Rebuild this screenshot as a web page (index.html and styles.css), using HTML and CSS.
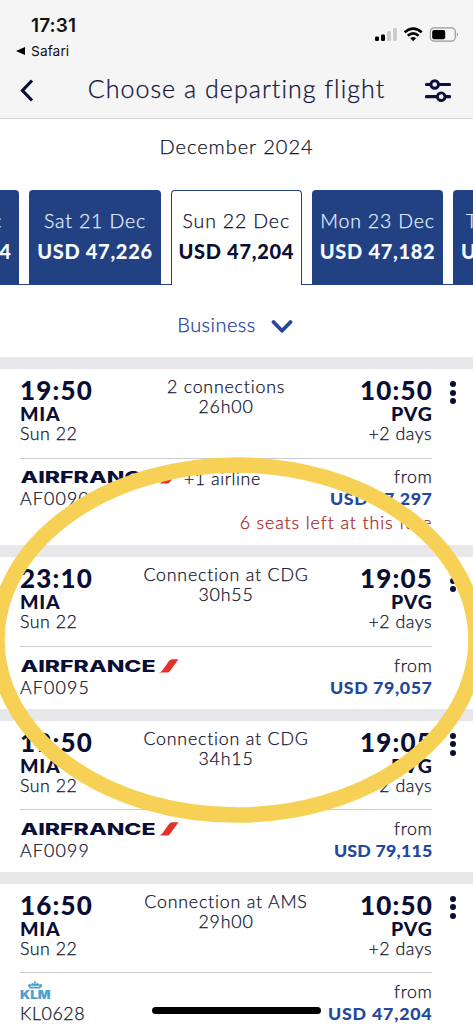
FILE: index.html
```html
<!DOCTYPE html>
<html lang="en">
<head>
<meta charset="utf-8">
<title>Choose a departing flight</title>
<link rel="stylesheet" href="styles.css">
</head>
<body>
<svg class="defs" width="0" height="0">
  <symbol id="airfrance" viewBox="0 0 160 16">
    <text class="af-word" x="0.500" y="13.300" textLength="135" lengthAdjust="spacingAndGlyphs">AIRFRANCE</text>
    <path d="M139 13.500 C141 13 141.800 12.300 143 10.600 L149 2 Q150.200 0.300 152.300 0.300 H158.500 L150 12 Q149 13.500 147 13.500Z" fill="#e2332b"/>
  </symbol>
</svg>
<div class="screen">
  <header class="header">
    <div class="status">
      <div class="clock">17:31</div>
      <svg class="status-icons" width="84" height="16" viewBox="0 0 84 16">
        <rect x="0" y="9.500" width="4" height="4.500" rx="1.200"/>
        <rect x="6" y="7.500" width="4" height="6.500" rx="1.200"/>
        <rect x="12" y="4" width="4" height="10" rx="1.200" fill="#ccc"/>
        <rect x="18" y="1" width="4" height="13" rx="1.200" fill="#ccc"/>
        <g fill="none" stroke="#000" stroke-width="2.600">
          <path d="M29.700 5.400 Q38.200 -2.200 46.700 5.400"/>
          <path d="M32.800 8.800 Q38.200 4.100 43.600 8.800"/>
        </g>
        <path d="M35.300 11.200 Q38.200 8.800 41.100 11.200 L38.200 14.200Z"/>
        <rect x="55.300" y="0.900" width="25" height="13.200" rx="3.800" fill="none" stroke="#999" stroke-width="1.200"/>
        <rect x="57.200" y="2.900" width="13" height="9.300" rx="2"/>
        <path d="M81.800 5.400 Q84 7.500 81.800 9.600Z" fill="#888"/>
      </svg>
    </div>
    <div class="back-app"><svg width="9" height="8" viewBox="0 0 9 8"><path d="M0 4 L9 0 V8Z"/></svg><span>Safari</span></div>
    <div class="nav">
      <svg width="14" height="23" viewBox="0 0 14 23"><path d="M12 1.500 L2.500 11.500 L12 21.500" fill="none" stroke="#0c0f3a" stroke-width="3.200"/></svg>
      <h1 class="title">Choose a departing flight</h1>
      <svg width="26" height="23" viewBox="0 0 26 23"><g fill="#f5f5f5" stroke="#0c0f3a" stroke-width="2.900"><path d="M1.500 5.500H24.500M1.500 17.700H24.500" stroke-width="3.200" stroke-linecap="round"/><circle cx="9.700" cy="5.500" r="3.800"/><circle cx="16.200" cy="17.700" r="3.800"/></g></svg>
    </div>
  </header>

  <div class="month">December 2024</div>
  <div class="tabs">
    <div class="tab"><span class="tab-day">Fri 20 Dec</span><span class="tab-price">USD 47,204</span></div>
    <div class="tab"><span class="tab-day">Sat 21 Dec</span><span class="tab-price">USD 47,226</span></div>
    <div class="tab selected"><span class="tab-day">Sun 22 Dec</span><span class="tab-price">USD 47,204</span></div>
    <div class="tab"><span class="tab-day">Mon 23 Dec</span><span class="tab-price">USD 47,182</span></div>
    <div class="tab"><span class="tab-day">Tue 24 Dec</span><span class="tab-price">USD 47,204</span></div>
  </div>
  <div class="cabin"><span>Business</span><svg width="22" height="15" viewBox="0 0 22 15"><path d="M2.500 3 L11 11.800 L19.500 3" fill="none" stroke="#2546a3" stroke-width="3.800" stroke-linecap="round" stroke-linejoin="round"/></svg></div>

  <main class="flights">
    <article class="flight tall">
      <div class="route">
        <div class="place"><b class="time">19:50</b><b class="code">MIA</b><span>Sun 22</span></div>
        <div class="via"><span>2 connections</span><span>26h00</span></div>
        <div class="place end"><b class="time">10:50</b><b class="code">PVG</b><span>+2 days</span></div>
      </div>
      <div class="offer">
        <div class="carrier"><svg class="af" width="160" height="16"><use href="#airfrance"/></svg><span class="number">AF0090</span></div>
        <span class="extra">+1 airline</span>
        <div class="fare"><span>from</span><b>USD 47,297</b><span class="seats">6 seats left at this fare</span></div>
      </div>
      <div class="more"><i></i><i></i><i></i></div>
    </article>
    <article class="flight">
      <div class="route">
        <div class="place"><b class="time">23:10</b><b class="code">MIA</b><span>Sun 22</span></div>
        <div class="via"><span>Connection at CDG</span><span>30h55</span></div>
        <div class="place end"><b class="time">19:05</b><b class="code">PVG</b><span>+2 days</span></div>
      </div>
      <div class="offer">
        <div class="carrier"><svg class="af" width="160" height="16"><use href="#airfrance"/></svg><span class="number">AF0095</span></div>
        <div class="fare"><span>from</span><b>USD 79,057</b></div>
      </div>
      <div class="more"><i></i><i></i><i></i></div>
    </article>
    <article class="flight">
      <div class="route">
        <div class="place"><b class="time">19:50</b><b class="code">MIA</b><span>Sun 22</span></div>
        <div class="via"><span>Connection at CDG</span><span>34h15</span></div>
        <div class="place end"><b class="time">19:05</b><b class="code">PVG</b><span>+2 days</span></div>
      </div>
      <div class="offer">
        <div class="carrier"><svg class="af" width="160" height="16"><use href="#airfrance"/></svg><span class="number">AF0099</span></div>
        <div class="fare"><span>from</span><b class="narrow">USD 79,115</b></div>
      </div>
      <div class="more"><i></i><i></i><i></i></div>
    </article>
    <article class="flight">
      <div class="route">
        <div class="place"><b class="time">16:50</b><b class="code">MIA</b><span>Sun 22</span></div>
        <div class="via"><span>Connection at AMS</span><span>29h00</span></div>
        <div class="place end"><b class="time">10:50</b><b class="code">PVG</b><span>+2 days</span></div>
      </div>
      <div class="offer">
        <div class="carrier">
          <svg class="klm" width="31" height="20" viewBox="0 0 31 20">
            <g fill="#4a9fd3"><circle cx="9.500" cy="4.500" r="1.600"/><circle cx="12.500" cy="3.500" r="1.600"/><circle cx="17.500" cy="3.500" r="1.600"/><circle cx="20.500" cy="4.500" r="1.600"/><rect x="14.500" y="0" width="1" height="5"/><rect x="13.800" y="0.800" width="2.400" height="1"/><circle cx="15" cy="4" r="1.300"/><path d="M9 5.700 H21 L20.400 7.500 H9.600Z"/></g>
            <text class="klm-word" x="0" y="18" textLength="30.500" lengthAdjust="spacingAndGlyphs">KLM</text>
          </svg>
          <span class="number kl">KL0628</span>
        </div>
        <div class="fare"><span>from</span><b class="wide">USD 47,204</b></div>
      </div>
      <div class="more"><i></i><i></i><i></i></div>
    </article>
  </main>
  <svg class="highlight" width="473" height="1024" viewBox="0 0 473 1024"><ellipse cx="236.500" cy="640" rx="239.500" ry="175" fill="none" stroke="#f6d155" stroke-width="15.500"/></svg>
  <div class="home-bar"></div>
</div>
</body>
</html>
```
FILE: styles.css
```css
* { box-sizing: border-box; }
body { margin: 0; background: #fff; }
.defs { display: block; height: 0; }
.screen {
  position: relative;
  width: 473px;
  height: 1024px;
  overflow: hidden;
  background: #fff;
  color: #10122c;
  font-family: Lato, "Open Sans", sans-serif;
  font-size: 17.8px;
  font-weight: 300;
  -webkit-text-stroke: 0.25px currentColor;
}
b, text, .clock, .back-app, .tab-price { -webkit-text-stroke: 0; }
.header { height: 119px; background: #f5f5f5; border-bottom: 1px solid #d6d6d8; }
.status { display: flex; justify-content: space-between; padding: 14px 14px 0 31px; height: 42px; }
.clock { font: 600 19px/24px Inter, sans-serif; color: #111; letter-spacing: 0.1px; }
.status-icons { margin-top: 13px; }
.back-app {
  display: flex; align-items: center; gap: 6px; height: 18px; padding-left: 16px;
  font: 400 13.7px/18px Inter, sans-serif; color: #111; letter-spacing: 0.1px;
}
.nav { display: flex; align-items: center; justify-content: space-between; height: 60px; padding: 0 22px 0 20px; }
.title { margin: -4px 0 0 14px; font-size: 25px; font-weight: 300; line-height: 32px; letter-spacing: 1.05px; color: #10123a; }
.month { height: 71px; padding-top: 15px; text-align: center; font-size: 20px; line-height: 24px; letter-spacing: 1px; }
.tabs { display: flex; gap: 10px; height: 95px; margin-left: -112px; width: 720px; background: linear-gradient(#24427f, #24427f) bottom / 100% 1px no-repeat; }
.tab {
  flex: 0 0 131.300px; display: flex; flex-direction: column; align-items: center;
  padding-top: 19px; background: #224183; color: #e6f0ff; border-radius: 4px 4px 0 0; white-space: nowrap;
}
.tab.selected { background: #fff; color: #10122c; border: 1px solid #24427f; border-bottom: 0; padding-top: 18px; }
.tab-day { font-size: 19.5px; line-height: 24px; height: 30px; letter-spacing: 0.85px; }
.tab-price { font-size: 20px; font-weight: 900; line-height: 24px; height: 24px; color: #f6faff; letter-spacing: 0.7px; }
.selected .tab-price { color: #0b0e30; }
.cabin { display: flex; justify-content: center; align-items: center; gap: 15px; height: 72px; padding: 6px 3px 0 0; color: #1c3d96; font-size: 20px; letter-spacing: 0.45px; }
.cabin svg { margin-top: 4px; }
.flights { display: block; }
.flight {
  display: grid; grid-template: 101.300px auto / 412px 1fr; height: 163.300px; padding-left: 20px;
  border-top: 12.500px solid #e8e8ea;
}
.flight.tall { height: 188.300px; }
.route { display: grid; grid-template-columns: 90px 1fr 90px; padding-top: 7px; height: 89.500px; border-bottom: 1px solid #ccccd0; }
.place { display: flex; flex-direction: column; line-height: 20px; letter-spacing: 0.5px; }
.place span { margin-top: -1px; }
.end, .fare { align-items: flex-end; }
.time { font-size: 26px; font-weight: 900; line-height: 28px; color: #0b0e35; letter-spacing: 1.2px; }
.code { font-size: 19.5px; font-weight: 900; line-height: 20px; color: #0b0e35; letter-spacing: 0.8px; }
.end .time { margin-right: -1px; }
.end .code { margin-right: -0.800px; }
.via { display: flex; flex-direction: column; align-items: center; line-height: 20px; letter-spacing: 0.8px; }
.offer { grid-row: 2; display: flex; margin-top: -12px; }
.carrier { display: flex; flex-direction: column; width: 164px; padding-top: 11px; }
.af { flex: none; margin-top: 1px; }
.af-word { font: 800 16px Inter, sans-serif; fill: #0b0e35; }
.klm { flex: none; margin-top: -3px; }
.klm-word { font: 900 11.5px Inter, sans-serif; fill: #4a9fd3; }
.number { line-height: 20px; margin-top: 2px; letter-spacing: 1.15px; }
.number.kl { letter-spacing: 0.6px; }
.extra { line-height: 22px; padding-top: 9px; letter-spacing: 0.55px; }
.fare { display: flex; flex-direction: column; margin-left: auto; padding-top: 7px; line-height: 22px; letter-spacing: 0.6px; }
.fare > * { margin-right: -0.500px; }
.fare b { font-size: 17.8px; font-weight: 900; line-height: 22px; color: #24489c; }
.fare b.narrow { letter-spacing: 0.2px; }
.fare b.wide { letter-spacing: 0.8px; }
.seats { line-height: 26px; color: #a81c24; margin-left: -130px; letter-spacing: 0.9px; }
.more { grid-column: 2; grid-row: 1; display: flex; flex-direction: column; gap: 2.500px; padding: 12px 0 0 18px; }
.more i { width: 6px; height: 6px; border-radius: 50%; background: #0b0e35; }
.highlight { position: absolute; left: 0; top: 0; }
.home-bar { position: absolute; left: 152px; top: 1007px; width: 169px; height: 7px; border-radius: 4px; background: #000; }
```
